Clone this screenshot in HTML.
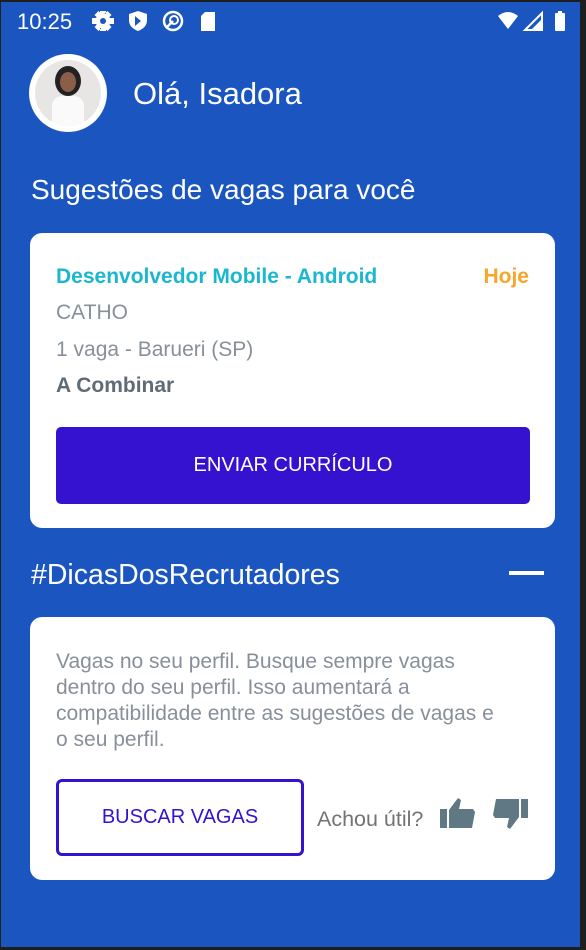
<!DOCTYPE html>
<html><head><meta charset="utf-8"><style>
*{margin:0;padding:0;box-sizing:border-box}
html,body{width:586px;height:950px;background:#1e1e1e;overflow:hidden;font-family:"Liberation Sans",sans-serif}
#s{position:absolute;left:1px;top:2px;width:579px;height:945px;background:#1b56c0}
.a{position:absolute}
.t{color:#fff}
.card{position:absolute;left:29px;width:525px;background:#fff;border-radius:12px}
</style></head><body><div id="s">
<div class="a t" style="left:16px;top:7px;font-size:22px">10:25</div>
<svg class="a" style="left:90px;top:8px" width="130" height="24" viewBox="0 0 130 24" fill="#fff">
<circle cx="12" cy="11" r="7.5"/><circle cx="12" cy="11" r="3" fill="#1b56c0"/>
<path d="M9 1h6v4h-6zM9 17h6v4h-6zM1 8v6h4V8zM19 8v6h4V8zM3.5 5l4-4 3 3-4 4zM20.5 17l-4 4-3-3 4-4zM3.5 17l4 4 3-3-4-4zM20.5 5l-4-4-3 3 4 4z"/>
<path d="M47 1l9 3v6c0 6-4 9-9 11-5-2-9-5-9-11V4z"/><path d="M44 6l6 5-6 5z" fill="#1b56c0"/>
<circle cx="82" cy="11" r="9" fill="none" stroke="#fff" stroke-width="2.5"/><circle cx="83" cy="10" r="4" fill="none" stroke="#fff" stroke-width="2"/><path d="M76 17l6-6" stroke="#fff" stroke-width="2.5"/>
<path d="M114 2h10v19h-14V6z"/>
</svg>
<svg class="a" style="left:495px;top:8px" width="75" height="24" viewBox="0 0 75 24" fill="#fff">
<path d="M2 6q10-8 20 0l-10 13z"/><path d="M46 3v17H29z" fill="none" stroke="#fff" stroke-width="2"/><path d="M46 9v11H35z"/>
<rect x="59" y="3" width="10" height="18" rx="1"/><rect x="62" y="1" width="4" height="3"/>
</svg>
<div class="a" style="left:28px;top:52px;width:78px;height:78px;border-radius:50%;background:#fff"></div>
<div class="a" style="left:34px;top:58px;width:66px;height:66px;border-radius:50%;background:#e8e6e4;overflow:hidden">
<div class="a" style="left:20px;top:6px;width:26px;height:30px;border-radius:50%;background:#222"></div>
<div class="a" style="left:25px;top:12px;width:16px;height:20px;border-radius:50%;background:#8a5e48"></div>
<div class="a" style="left:17px;top:36px;width:32px;height:40px;border-radius:10px;background:#fafafa"></div>
</div>
<div class="a t" style="left:132px;top:74px;font-size:31px">Olá, Isadora</div>
<div class="a t" style="left:30px;top:172px;font-size:28px">Sugestões de vagas para você</div>
<div class="card" style="top:231px;height:295px">
<div class="a" style="left:26px;top:32px;font-size:21px;font-weight:bold;color:#1ab7cf">Desenvolvedor Mobile - Android</div>
<div class="a" style="right:26px;top:32px;font-size:21px;font-weight:bold;color:#f8a62a">Hoje</div>
<div class="a" style="left:26px;top:68px;font-size:21px;color:#87909a">CATHO</div>
<div class="a" style="left:26px;top:105px;font-size:21px;color:#87909a">1 vaga - Barueri (SP)</div>
<div class="a" style="left:26px;top:141px;font-size:21px;font-weight:bold;color:#5f6b75">A Combinar</div>
<div class="a" style="left:26px;top:194px;width:474px;height:77px;background:#3512cf;border-radius:5px;color:#fff;font-size:20px;text-align:center;line-height:77px">ENVIAR CURRÍCULO</div>
</div>
<div class="a t" style="left:30px;top:557px;font-size:28.5px">#DicasDosRecrutadores</div>
<div class="a" style="left:508px;top:569px;width:35px;height:4px;background:#fff"></div>
<div class="card" style="top:615px;height:263px">
<div class="a" style="left:26px;top:32px;width:490px;white-space:nowrap;font-size:21px;line-height:26px;color:#87909a">Vagas no seu perfil. Busque sempre vagas<br>dentro do seu perfil. Isso aumentará a<br>compatibilidade entre as sugestões de vagas e<br>o seu perfil.</div>
<div class="a" style="left:26px;top:162px;width:248px;height:77px;border:3px solid #3512cf;border-radius:6px;color:#3512cf;font-size:20px;text-align:center;line-height:71px">BUSCAR VAGAS</div>
<div class="a" style="left:287px;top:190px;font-size:21.5px;color:#737373">Achou útil?</div>
<svg class="a" style="left:410px;top:180px" width="90" height="36" viewBox="0 0 90 36" fill="#607784">
<rect x="0" y="12" width="7" height="19"/><path d="M9 13l9-12 3 2-2 9h14l2 3-3 16H9z"/>
<rect x="81" y="2" width="7" height="19"/><path d="M79 20l-9 12-3-2 2-9H55l-2-3 3-16h23z"/>
</svg>
</div>
</div></body></html>
